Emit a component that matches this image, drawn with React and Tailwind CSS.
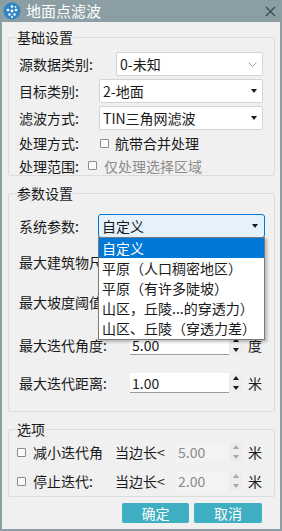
import React from "react";

const FONT = "font-['Noto_Sans_CJK_SC','Noto_Sans_CJK_JP',sans-serif]";

function Arrow() {
  return (
    <svg width="6" height="4" viewBox="0 0 6 4" className="block">
      <path d="M0 0 L6 0 L3 4 Z" fill="#1a1a1a" />
    </svg>
  );
}

function Chevron() {
  return (
    <svg width="9" height="5" viewBox="0 0 9 5" className="block">
      <path d="M0.5 0.5 L4.5 4.5 L8.5 0.5" fill="none" stroke="#a0a0a0" strokeWidth="1" />
    </svg>
  );
}

function Combo({ text, chevron }) {
  return (
    <div className="flex-1 h-[24px] bg-white border border-[#d4d4d4] rounded-[2px] flex items-center pl-[3px] pr-[5px] justify-between">
      <span className="text-[14px] leading-[18px]">{text}</span>
      {chevron ? <Chevron /> : <Arrow />}
    </div>
  );
}

function Check() {
  return <span className="inline-block w-[9px] h-[9px] border border-[#8a8a8a] rounded-[1px] bg-[#fbfbfb]" />;
}

function SpinButtons({ disabled }) {
  const c = disabled ? "#a8a8a8" : "#1a1a1a";
  return (
    <div className="w-[13px] h-full flex flex-col gap-[1px] py-[1px]">
      <div className={`flex-1 flex items-center justify-center ${disabled ? "bg-[#ececec]" : "bg-[#ededed]"}`}>
        <svg width="6" height="4" viewBox="0 0 6 4"><path d="M0 4 L6 4 L3 0 Z" fill={c} /></svg>
      </div>
      <div className={`flex-1 flex items-center justify-center ${disabled ? "bg-[#ececec]" : "bg-[#ededed]"}`}>
        <svg width="6" height="4" viewBox="0 0 6 4"><path d="M0 0 L6 0 L3 4 Z" fill={c} /></svg>
      </div>
    </div>
  );
}

function Spin({ value, unit, disabled, left }) {
  return (
    <div className="flex items-center h-[20px]">
      <div
        className={`h-[20px] flex items-center ${disabled ? "bg-[#f3f3f3] text-[#8a8a8a]" : "bg-white border-b border-[#9a9a9a] text-[#1a1a1a]"}`}
        style={{ width: 229 - left }}
      >
        <span className="pl-[2px] text-[14px] leading-[18px]">{value}</span>
      </div>
      <SpinButtons disabled={disabled} />
      <span className="ml-[6px] text-[14px] leading-[18px]">{unit}</span>
    </div>
  );
}

function Group({ title, children, className = "" }) {
  return (
    <fieldset className={`border border-[#dcdcdc] rounded-[2px] ${className}`}>
      <legend className="ml-[8px] text-[14px] leading-[20px] text-[#1a1a1a]">{title}</legend>
      {children}
    </fieldset>
  );
}

export default function App() {
  return (
    <div className={`w-[282px] h-[531px] bg-[#8a9ea4] flex flex-col ${FONT} text-[#1a1a1a]`}>
      {/* Title bar */}
      <div className="h-[22px] flex items-center pl-[3px] pr-[6px] shrink-0">
        <svg width="18" height="18" viewBox="0 0 18 18" className="block">
          <circle cx="9" cy="9" r="8.5" fill="#2f86c6" />
          <circle cx="9" cy="4.5" r="1.3" fill="#fff" />
          <circle cx="5" cy="8" r="1.3" fill="#fff" />
          <circle cx="9" cy="9" r="1.4" fill="#fff" />
          <circle cx="13" cy="8" r="1.3" fill="#fff" />
          <circle cx="6.5" cy="12.5" r="1.2" fill="#fff" />
          <circle cx="11.5" cy="12.5" r="1.2" fill="#fff" />
          <circle cx="9" cy="15" r="1" fill="#fff" />
          <circle cx="12.5" cy="4.8" r="0.9" fill="#fff" />
        </svg>
        <span className="ml-[5px] text-white text-[15px] leading-[20px]">地面点滤波</span>
        <div className="flex-1" />
        <svg width="11" height="11" viewBox="0 0 11 11" className="block">
          <path d="M1 1 L10 10 M10 1 L1 10" stroke="#3e4c51" strokeWidth="1.4" />
        </svg>
      </div>

      {/* Body */}
      <div className="flex-1 mx-[2px] mb-[2px] bg-[#f0f0f0] pl-[6px] pr-[5px] flex flex-col">
        <Group title="基础设置" className="mt-[5px]">
          <div className="pl-[10px] pr-[11px] pt-[5px] flex flex-col gap-[3px]">
            <div className="flex items-center h-[24px]">
              <span className="w-[97px] text-[14px] leading-[18px]">源数据类别:</span>
              <Combo text="0-未知" chevron />
            </div>
            <div className="flex items-center h-[24px]">
              <span className="w-[80px] text-[14px] leading-[18px]">目标类别:</span>
              <Combo text="2-地面" />
            </div>
            <div className="flex items-center h-[24px]">
              <span className="w-[80px] text-[14px] leading-[18px]">滤波方式:</span>
              <Combo text="TIN三角网滤波" />
            </div>
            <div className="flex items-center h-[20px]">
              <span className="w-[81px] text-[14px] leading-[18px]">处理方式:</span>
              <Check />
              <span className="ml-[6px] text-[14px] leading-[18px]">航带合并处理</span>
            </div>
            <div className="flex items-center h-[19px]">
              <span className="w-[69px] text-[14px] leading-[18px]">处理范围:</span>
              <Check />
              <span className="ml-[7px] text-[14px] leading-[18px] text-[#8c8c8c]">仅处理选择区域</span>
            </div>
          </div>
        </Group>

        <Group title="参数设置" className="mt-[7px]">
          <div className="pl-[10px] pr-[9px] pt-[11px] pb-[18px] flex flex-col">
            <div className="flex items-center h-[24px]">
              <span className="w-[79px] text-[14px] leading-[18px]">系统参数:</span>
              <div className="relative flex-1 h-[24px]">
                <div className="h-full bg-[#e5f1fb] border border-[#0078d7] rounded-[3px] flex items-center justify-between pl-[3px] pr-[6px]">
                  <span className="text-[14px] leading-[18px]">自定义</span>
                  <Arrow />
                </div>
                <div className="absolute left-0 top-[23px] w-[167px] bg-white border border-[#7a7a7a] shadow-[2px_2px_3px_rgba(0,0,0,0.25)] z-10 flex flex-col">
                  <div className="h-[20px] bg-[#0078d7] text-white pl-[3px] text-[14px] leading-[20px]">自定义</div>
                  <div className="h-[20px] pl-[3px] text-[14px] leading-[20px]">平原（人口稠密地区）</div>
                  <div className="h-[20px] pl-[3px] text-[14px] leading-[20px]">平原（有许多陡坡）</div>
                  <div className="h-[20px] pl-[3px] text-[14px] leading-[20px]">山区，丘陵...的穿透力）</div>
                  <div className="h-[21px] pl-[3px] text-[14px] leading-[20px]">山区、丘陵（穿透力差）</div>
                </div>
              </div>
            </div>
            {/* rows partly covered by the open dropdown list */}
            <div className="flex items-center h-[20px] mt-[14px]">
              <span className="w-[79px] overflow-hidden whitespace-nowrap text-[14px] leading-[18px]">最大建筑物尺寸:</span>
            </div>
            <div className="flex items-center h-[20px] mt-[20px]">
              <span className="w-[79px] overflow-hidden whitespace-nowrap text-[14px] leading-[18px]">最大坡度阈值:</span>
            </div>
            <div className="flex items-center h-[20px] mt-[23px]">
              <span className="w-[111px] text-[14px] leading-[18px]">最大迭代角度:</span>
              <Spin value="5.00" unit="度" left={130} />
            </div>
            <div className="flex items-center h-[20px] mt-[18px]">
              <span className="w-[111px] text-[14px] leading-[18px]">最大迭代距离:</span>
              <Spin value="1.00" unit="米" left={130} />
            </div>
          </div>
        </Group>

        <Group title="选项" className="mt-[7px]">
          <div className="pl-[8px] pt-[3px] pb-[5px] flex flex-col gap-[9px]">
            <div className="flex items-center h-[20px]">
              <Check />
              <span className="ml-[7px] w-[82px] text-[14px] leading-[18px]">减小迭代角</span>
              <span className="w-[61px] text-[14px] leading-[18px]">当边长&lt;</span>
              <Spin value="5.00" unit="米" disabled left={176} />
            </div>
            <div className="flex items-center h-[20px]">
              <Check />
              <span className="ml-[7px] w-[82px] text-[14px] leading-[18px]">停止迭代:</span>
              <span className="w-[61px] text-[14px] leading-[18px]">当边长&lt;</span>
              <Spin value="2.00" unit="米" disabled left={176} />
            </div>
          </div>
        </Group>

        <div className="mt-[6px] flex justify-end gap-[5px] pr-[13px]">
          <div className="w-[67px] h-[20px] bg-[#3eaec2] text-white text-[14px] leading-[20px] text-center rounded-[2px]">确定</div>
          <div className="w-[68px] h-[20px] bg-[#3eaec2] text-white text-[14px] leading-[20px] text-center rounded-[2px]">取消</div>
        </div>
      </div>
    </div>
  );
}
